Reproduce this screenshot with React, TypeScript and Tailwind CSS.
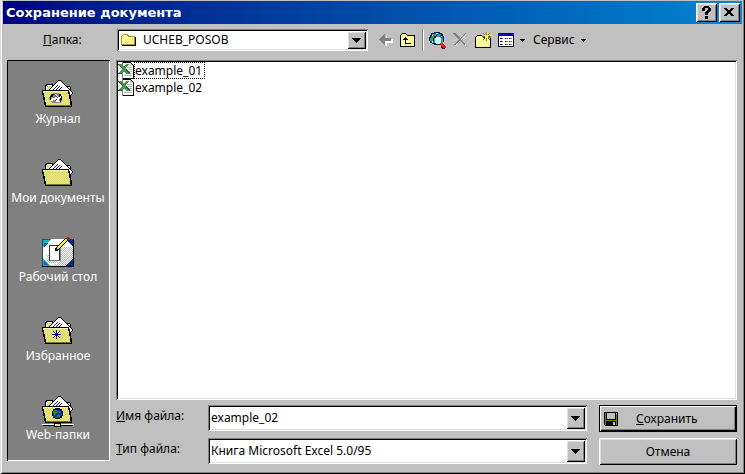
import { useState, type ReactNode } from "react";

const SUNKEN =
  "bg-white shadow-[inset_1px_1px_0_#808080,inset_-1px_-1px_0_#fff,inset_2px_2px_0_#000,inset_-2px_-2px_0_#dfdfdf]";
const RAISED =
  "bg-[#c0c0c0] shadow-[inset_1px_1px_0_#fff,inset_-1px_-1px_0_#000,inset_2px_2px_0_#dfdfdf,inset_-2px_-2px_0_#808080]";

function Pic({ w, h, children }: { w: number; h: number; children: ReactNode }) {
  return (
    <svg width={w} height={h} viewBox={`0 0 ${w} ${h}`} shapeRendering="crispEdges" aria-hidden="true" className="shrink-0">
      {children}
    </svg>
  );
}

function Patterns() {
  return (
    <svg width="0" height="0" className="absolute" aria-hidden="true">
      <defs>
        <pattern id="dither" width="2" height="2" patternUnits="userSpaceOnUse">
          <path fill="#f2ee30" d="M0 0h2v2H0z" />
          <path fill="#d2d2bc" d="M0 0h1v1H0zM1 1h1v1H1z" />
        </pattern>
        <pattern id="pale" width="2" height="2" patternUnits="userSpaceOnUse">
          <path fill="#ffff50" d="M0 0h2v2H0z" />
          <path fill="#fffff0" d="M1 0h1v1H1zM0 1h1v1H0z" />
        </pattern>
        <pattern id="glow" width="2" height="2" patternUnits="userSpaceOnUse">
          <path fill="#ffff50" d="M0 0h2v2H0z" />
          <path fill="#fffff0" d="M0 0h1v1H0zM1 1h1v1H1z" />
        </pattern>
        <pattern id="grain" width="2" height="2" patternUnits="userSpaceOnUse">
          <path fill="#fff" d="M0 0h2v2H0z" />
          <path fill="#b8b8b8" d="M0 0h1v1H0zM1 1h1v1H1z" />
        </pattern>
        <pattern id="leaf" width="2" height="2" patternUnits="userSpaceOnUse">
          <path fill="#18a02c" d="M0 0h2v2H0z" />
          <path fill="#6c8c6c" d="M1 0h1v1H1zM0 1h1v1H0z" />
        </pattern>
      </defs>
    </svg>
  );
}

function Caret({ big = false }: { big?: boolean }) {
  return big ? (
    <Pic w={9} h={5}>
      <path d="M0 0h9v1H0zM1 1h7v1H1zM2 2h5v1H2zM3 3h3v1H3zM4 4h1v1H4z" />
    </Pic>
  ) : (
    <Pic w={5} h={3}>
      <path d="M0 0h5v1H0zM1 1h3v1H1zM2 2h1v1H2z" />
    </Pic>
  );
}

function BigFolder({ children }: { children?: ReactNode }) {
  return (
    <Pic w={32} h={32}>
      <path d="M3 12V6h1V5h7v1h1v1h16v1h1v13h-2L3 13z" fill="#000" />
      <path d="M4 12V7h1V6h5v1h1v1h17v4z" fill="url(#dither)" />
      <path d="M4 7h1v5H4zM5 6h5v1H5z" fill="#fff" />
      <path d="M6 12 16 1h2l13 13-3 4z" fill="#000" />
      <path d="M7 12 16 2h2l11 11 1 1-3 3-1-5z" fill="#fff" />
      <path
        d="M12 9h1v1h-1zM13 8h1v1h-1zM14 7h1v1h-1zM15 6h1v1h-1zM11 10h1v1h-1zM15 9h1v1h-1zM16 8h1v1h-1zM17 7h1v1h-1zM14 10h1v1h-1zM18 9h1v1h-1zM19 8h1v1h-1zM17 10h1v1h-1z"
        fill="#1010d0"
      />
      <path d="M0 11h27v2h1v4h1v5h1v6H3v-2H2v-5H1v-5H0z" fill="#000" />
      <path d="M1 12h25v3h1v5h1v6H4v-3H3v-5H2v-4H1z" fill="url(#dither)" />
      <path d="M1 12h25v1H1z" fill="#f6f4b0" />
      <path d="M4 26h25v1H4z" fill="#77771c" />
      {children}
    </Pic>
  );
}

function JournalIcon() {
  return (
    <BigFolder>
      <path d="M11 14h6v1h2v2h1v5h-1v2h-9v-1H9v-2H7v-3h1v-2h3z" fill="#8a8a83" />
      <path d="M9 15h4v1h-2v2H9v3H8v-4h1zM17 15h2v2h1v4h-1v2h-2v-1h1v-4h-1z" fill="#000" />
      <path d="m13 14 3 4 3-1v2l-3 2 2 2h-4l-2-2-3 1v-2l5-2z" fill="#fff" />
      <path d="M12 15h1v1h-1zM13 16h1v1h-1zM14 17h1v1h-1zM15 18h1v1h-1zM14 20h1v1h-1zM13 21h1v1h-1z" fill="#44443a" />
    </BigFolder>
  );
}

function FavoritesIcon() {
  return (
    <BigFolder>
      <path d="M14 14h1v9h-1zM10 18h9v1h-9zM11 15h1v1h-1zM12 16h1v1h-1zM13 17h3v3h-3zM16 16h1v1h-1zM17 15h1v1h-1zM12 20h1v1h-1zM11 21h1v1h-1zM16 20h1v1h-1zM17 21h1v1h-1z" fill="#1010c0" />
    </BigFolder>
  );
}

function WebIcon() {
  return (
    <BigFolder>
      <path d="M13 13h5v1h2v2h1v5h-1v2h-2v1h-5v-1h-2v-2h-1v-5h1v-2h2z" fill="#05053c" />
      <path d="M13 15h5v3h2v3h-2v2h-5v-1h-2v-5h2z" fill="#1430b4" />
      <path d="M12 15h3v1h1v2h-2v2h-2v-2h-1v-2h1zM17 16h2v2h-2zM15 20h3v2h-2v1h-1z" fill="#218c2c" />
      <path d="M0 29h32v1H0z" fill="#fff" />
      <path d="M1 30h30v1H1zM15 27h1v2h-1z" fill="#000" />
      <path d="M12 28h7v4h-7z" fill="#000" />
      <path d="M13 29h5v2h-5z" fill="#e8e040" />
      <path d="M13 29h2v1h-2z" fill="#fff" />
    </BigFolder>
  );
}

function DesktopIcon() {
  return (
    <Pic w={32} h={32}>
      <path d="M0 2h32v28H0z" fill="#000" />
      <path d="M0 2h31v27H0z" fill="#fff" />
      <path d="M19 10h12v10l-9 9H9l9-4z" fill="url(#grain)" />
      <path d="M22 2h9v8zM4 18h3v6h9v2H6z" fill="url(#grain)" />
      <path d="M0 2h9L0 11zM0 21l9 8H0z" fill="#16b5b5" />
      <path d="M2 6h4L2 10zM2 24l5 4H2z" fill="#2355c8" />
      <path d="M23 29l8-8v8zM24 2h7v8z" fill="#0b2aa2" />
      <path d="M0 2h1v27H0zM0 2h8v1H0z" fill="#075959" />
      <path d="M7 8h11v16H7z" fill="#333" />
      <path d="M8 9h9v14H8z" fill="#fff" />
      <path d="M8 24h11V11h-1v12H8z" fill="#808080" />
      <path d="M14 13 25 2" stroke="#000" strokeWidth="4" fill="none" />
      <path d="M15 12 25 2" stroke="#f4ec30" strokeWidth="2" fill="none" />
      <path d="M13 12h2v2h-2z" fill="#000" />
      <path d="M25 0h2v1h1v2h-3V2h-1V1h1z" fill="#c00c10" />
    </Pic>
  );
}

function SmallFolder() {
  return (
    <Pic w={16} h={14}>
      <path d="M1 2h1V1h5v1h1v1h6v1h1v9H1z" fill="#000" />
      <path d="M0 3h1V2h1V1h5v1h1v1h6v9H0z" fill="#a29a28" />
      <path d="M1 3h1V2h4v1h1v1h6v7H1z" fill="#ffff98" />
      <path d="M5 8h1v1H5zM7 8h1v1H7zM9 6h1v1H9zM11 5h1v1h-1zM8 9h1v1H8zM10 7h1v1h-1zM12 6h1v1h-1zM10 9h1v1h-1zM12 8h1v1h-1zM6 9h1v1H6zM4 9h1v1H4zM12 10h1v1h-1zM11 8h1v1h-1z" fill="#ffc880" />
    </Pic>
  );
}

function BackIcon() {
  return (
    <Pic w={14} h={12}>
      <path d="M6 1h1v3h6v4H7v3H6v-1H5V9H4V8H3V7H2V6h1V5h1V4h1V3h1z" fill="#fff" transform="translate(1 1)" />
      <path d="M5 0h1v4h6v3H6v4H5v-1H4V9H3V8H2V7H1V6H0V5h1V4h1V3h1V2h1V1h1z" fill="#808080" />
    </Pic>
  );
}

function UpIcon() {
  return (
    <Pic w={16} h={14}>
      <path d="M0 2h1V1h1V0h4v1h1v1h8v12H0z" fill="#000" />
      <path d="M1 3V2h1V1h4v1h1v1h7v10H1z" fill="url(#pale)" />
      <path d="M5 4h1v1h1v1h1v1H6v3h5v1H5V7H3V6h1V5h1z" fill="#000" />
    </Pic>
  );
}

function SearchIcon() {
  return (
    <Pic w={17} h={17}>
      <path d="M5 0h6v1h2v1h1v2h1v6h-1v3H5v-1H3v-1H1V9H0V5h1V3h1V1h3z" fill="#05224b" />
      <path d="M5 1h5v1h2v2h2v4h-3V5H8V3H5zM2 4h2v3H2zM2 9h3v2H3z" fill="#1468e0" />
      <path d="M3 2h4v2H5v2H3zM1 6h3v3H1zM9 2h2v2H9z" fill="#3b9d52" />
      <path d="M7 1h2v1H7zM3 3h1v1H3zM12 4h1v2h-1zM3 9h1v2H3z" fill="#d5eef0" />
      <path d="M7 4h4v1h2v2h1v4h-2v1H7v-1H5V6h2z" fill="#5292a0" />
      <path d="M7 5h4v1h1v5h-1v1H7v-1H6V6h1z" fill="#b8ffff" />
      <path d="M8 6h2v2H8z" fill="#fff" />
      <path d="M11 11h3v1h1v1h1v1h1v2h-3v-1h-1v-1h-1v-1h-1z" fill="#ec1818" />
      <path d="M12 14h1v1h1v1h2v1h-3v-1h-1z" fill="#701010" />
    </Pic>
  );
}

function DeleteIcon() {
  return (
    <Pic w={15} h={14}>
      <path d="m2 2 11 11M13 2 2 13M3 2l10 10" stroke="#fff" strokeWidth="1" fill="none" />
      <path d="M0 0h3v1h1v1h1v1h1v1h1v1h1V4h1V3h1V2h1V1h1V0h1v1h-1v1h-1v1h-1v1H9v1H8v2h1v1h1v1h1v1h1v2h-1v-1h-1v-1H9V9H8V8H6v1H5v1H4v1H3v1H1v-1h1v-1h1V9h1V8h1V7h1V6H5V5H4V4H3V3H2V2H1V1H0z" fill="#808080" />
    </Pic>
  );
}

function NewFolderIcon() {
  return (
    <Pic w={17} h={16}>
      <path d="M0 5h1V4h1V3h5v1h1v1h8v11H0z" fill="#000" />
      <path d="M1 6V5h1V4h5v1h1v1h7v9H1z" fill="url(#glow)" />
      <path d="M11 0h1v9h-1zM7 4h9v1H7zM8 1h1v1H8zM9 2h1v1H9zM13 2h1v1h-1zM14 1h1v1h-1zM9 6h1v1H9zM8 7h1v1H8zM13 6h1v1h-1zM14 7h1v1h-1zM13 5h3v1h-3z" fill="#807a20" />
      <path d="M10 3h3v3h-3zM12 0h1v2h-1zM15 3h1v1h-1zM9 1h1v1H9zM14 2h2v1h-2z" fill="#ffff30" />
    </Pic>
  );
}

function ViewsIcon() {
  return (
    <Pic w={16} h={14}>
      <path d="M0 0h16v14H0z" />
      <path d="M1 3h14v10H1z" fill="#fff" />
      <path d="M0 0h16v3H0z" fill="#0000c0" />
      <path d="M2 5h2v1H2zM7 5h1v1H7zM11 5h1v1h-1zM2 8h2v1H2zM7 8h1v1H7zM11 8h1v1h-1zM2 11h2v1H2zM7 11h1v1H7zM11 11h1v1h-1z" fill="#000080" />
      <path d="M4 5h1v1H4zM8 5h2v1H8zM12 5h2v1h-2zM4 8h1v1H4zM8 8h2v1H8zM12 8h2v1h-2zM4 11h1v1H4zM8 11h2v1H8zM12 11h2v1h-2z" fill="#777" />
    </Pic>
  );
}

function ExcelIcon() {
  return (
    <Pic w={16} h={17}>
      <path d="M4 0h9v1h1v1h1v1h1v14H4z" fill="#000" />
      <path d="M5 1h7v3h3v12H5z" fill="#fff" />
      <path d="M4 0h1v17H4z" fill="#808080" />
      <path d="M12 1h1v1h1v1h1v1h-3z" fill="#c0c0c0" />
      <path d="M9 5h5v1H9zM10 7h4v1h-4zM10 9h4v1h-4zM12 11h2v1h-2zM6 13h8v1H6z" fill="#b4b4b4" />
      <path
        d="M0 2h4v1h1v1h2V3h1V2h3v1h-1v1H9v1H8v2h1v1h1v1h1v1h1v2H8v-1H7v-1H5v1H4v1H0v-1h1v-1h1V9h1V8h1V6H3V5H2V4H1V3H0z"
        fill="url(#leaf)"
      />
      <path d="M0 2h1v1h1v1h1v1h1v1h1v1H4V6H3V5H2V4H1V3H0zM8 7h1v1h1v1h1v1h1v2h-1v-1h-1v-1H9V9H8zM0 11h4v1H0z" fill="#1d5f27" />
    </Pic>
  );
}

function FloppyIcon() {
  return (
    <Pic w={14} h={14}>
      <path d="M0 0h14v14H1v-1H0z" />
      <path d="M1 1h1v12H1zM12 2h1v11h-1zM2 8h10v1H2z" fill="#808000" />
      <path d="M3 1h8v6H3zM9 10h2v3H9zM12 1h1v1h-1z" fill="#c0c0c0" />
    </Pic>
  );
}

const places = [
  { name: "Журнал", icon: <JournalIcon /> },
  { name: "Мои документы", icon: <BigFolder /> },
  { name: "Рабочий стол", icon: <DesktopIcon /> },
  { name: "Избранное", icon: <FavoritesIcon /> },
  { name: "Web-папки", icon: <WebIcon /> },
];

const files = ["example_01", "example_02"];

function DropArrow() {
  return (
    <span className={`pointer-events-none absolute inset-y-0.5 right-0.5 flex w-[19px] items-center justify-center ${RAISED}`}>
      <Caret big />
    </span>
  );
}

export default function App() {
  const [fileName, setFileName] = useState("example_02");

  return (
    <main className="flex min-h-screen flex-col bg-[#c0c0c0] px-[3px] pt-px font-['Noto_Sans','Liberation_Sans',sans-serif] text-[12px] leading-4 text-black shadow-[inset_1px_0_0_#dfdfdf,inset_-1px_-1px_0_#000,inset_2px_0_0_#fff,inset_-2px_-2px_0_#808080]">
      <Patterns />
      <header className="flex h-[23px] items-center gap-0.5 bg-linear-to-r from-[#000080] to-[#1084d0] pr-0.5 pl-[3px]">
        <h1 className="flex-1 font-['DejaVu_Sans',sans-serif] text-[13px] font-bold text-white">Сохранение документа</h1>
        <button type="button" aria-label="Справка" className={`flex h-[19px] w-[21px] items-center justify-center ${RAISED}`}>
          <Pic w={9} h={13}>
            <path d="M2 0h5v1h1v1h1v3H8v1H7v1H6v2H3V6h1V5h1V4h1V2H3v3H0V2h1V1h1zM3 10h3v3H3z" />
          </Pic>
        </button>
        <button type="button" aria-label="Закрыть" className={`flex h-[19px] w-[21px] items-center justify-center ${RAISED}`}>
          <Pic w={11} h={9}>
            <path d="M0 0h3v1H0zM7 0h3v1H7zM1 1h3v1H1zM6 1h3v1H6zM2 2h6v1H2zM3 3h4v2H3zM2 5h6v1H2zM1 6h3v1H1zM6 6h3v1H6zM0 7h3v1H0zM7 7h3v1H7z" />
          </Pic>
        </button>
      </header>

      <div className="flex h-9 items-center pb-1">
        <label htmlFor="folder" className="w-[114px] pl-10">
          <u>П</u>апка:
        </label>
        <div className={`relative flex h-[22px] w-[251px] items-center pl-1 ${SUNKEN}`}>
          <SmallFolder />
          <select id="folder" className="h-full flex-1 appearance-none bg-transparent pl-1.5 outline-none">
            <option>UCHEB_POSOB</option>
          </select>
          <DropArrow />
        </div>
        <div role="toolbar" className="flex items-center pl-[11px]">
          <button type="button" aria-label="Назад"><BackIcon /></button>
          <button type="button" aria-label="На один уровень вверх" className="ml-[7px]"><UpIcon /></button>
          <span className="ml-1.5 h-[22px] w-0.5 border-r border-l border-r-white border-l-[#808080]" />
          <button type="button" aria-label="Найти в Интернете" className="ml-[5px]"><SearchIcon /></button>
          <button type="button" aria-label="Удалить" className="ml-[7px]"><DeleteIcon /></button>
          <button type="button" aria-label="Создать папку" className="ml-[7px]"><NewFolderIcon /></button>
          <button type="button" aria-label="Представления" className="ml-1.5 flex items-center gap-1.5">
            <ViewsIcon />
            <Caret />
          </button>
          <button type="button" className="ml-2 flex items-center gap-1.5">
            Сервис
            <Caret />
          </button>
        </div>
      </div>

      <div className="flex flex-1 gap-1.5 pr-[5px] pb-[9px] pl-1">
        <nav className="mb-1 flex w-[103px] flex-col gap-[31px] bg-[#808080] pt-[19px] pr-px shadow-[inset_1px_1px_0_#000,inset_-1px_-1px_0_#fff]">
          {places.map((place) => (
            <button key={place.name} type="button" className="flex h-12 w-full flex-col items-center whitespace-nowrap text-white">
              {place.icon}
              {place.name}
            </button>
          ))}
        </nav>

        <form className="flex flex-1 flex-col gap-[5px]" onSubmit={(e) => e.preventDefault()}>
          <ul className={`flex-1 p-0.5 ${SUNKEN}`}>
            {files.map((file, i) => (
              <li key={file}>
                <button type="button" className="flex h-[17px] items-center" onClick={() => setFileName(file)}>
                  <ExcelIcon />
                  <span className={`border border-dotted pr-0.5 leading-[15px] ${i === 0 ? "border-black" : "border-transparent"}`}>{file}</span>
                </button>
              </li>
            ))}
          </ul>
          <div className="grid grid-cols-[92px_1fr_138px] gap-y-1.5">
            <label htmlFor="name" className="pt-[3px]"><u>И</u>мя файла:</label>
            <div className={`relative mr-3 h-[26px] ${SUNKEN}`}>
              <input
                id="name"
                value={fileName}
                onChange={(e) => setFileName(e.target.value)}
                className="h-full w-full bg-transparent pr-6 pb-0.5 pl-[3px] outline-none"
              />
              <DropArrow />
            </div>
            <button type="submit" className="flex h-[27px] items-center gap-[18px] border border-black bg-[#c0c0c0] pl-1 shadow-[inset_1px_1px_0_#fff,inset_-1px_-1px_0_#000,inset_-2px_-2px_0_#808080]">
              <FloppyIcon />
              <span><u>С</u>охранить</span>
            </button>
            <label htmlFor="type" className="pt-[3px]"><u>Т</u>ип файла:</label>
            <div className={`relative mr-3 h-[26px] ${SUNKEN}`}>
              <select id="type" className="h-full w-full appearance-none bg-transparent pl-[3px] outline-none">
                <option>Книга Microsoft Excel 5.0/95</option>
              </select>
              <DropArrow />
            </div>
            <button type="button" className={`h-[27px] ${RAISED}`}>Отмена</button>
          </div>
        </form>
      </div>
    </main>
  );
}
